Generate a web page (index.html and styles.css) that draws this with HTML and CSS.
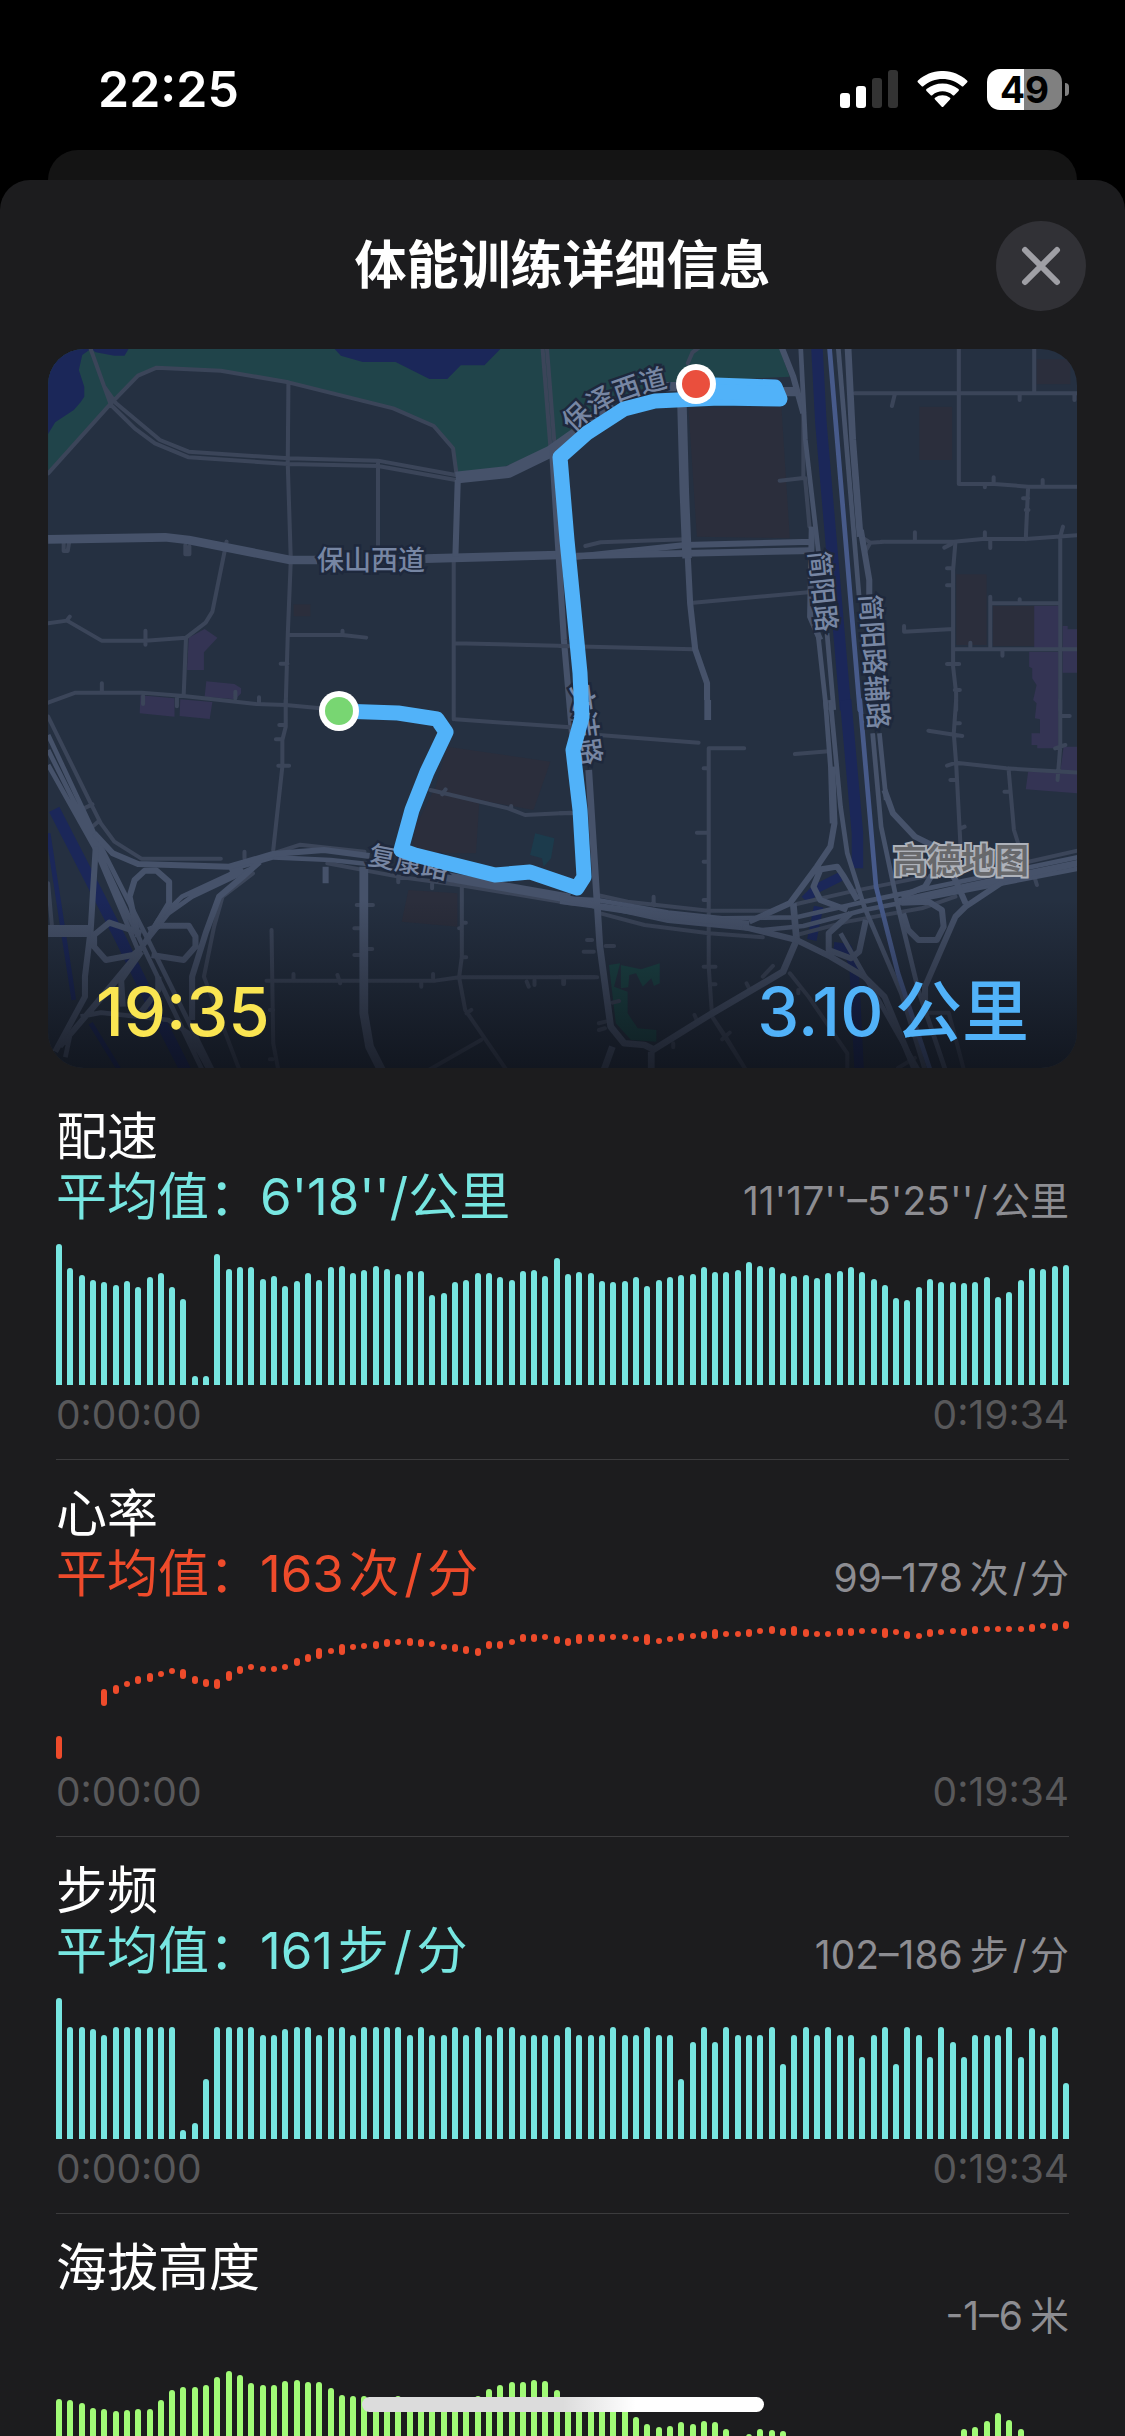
FILE: index.html
```html
<!DOCTYPE html>
<html lang="zh-CN">
<head>
    <meta charset="UTF-8">
    <meta name="viewport" content="width=device-width, initial-scale=1.0">
    <title>体能训练详细信息</title>
    <link rel="stylesheet" href="styles.css">
</head>
<body>
    <div class="status-bar">
        <span class="status-time">22:25</span>
        <div class="status-icons">
            <svg class="signal" viewBox="0 0 58 38" aria-hidden="true">
                <rect x="0" y="23" width="10" height="15" rx="3" fill="#fff"/>
                <rect x="16" y="16" width="10" height="22" rx="3" fill="#fff"/>
                <rect x="32" y="8" width="10" height="30" rx="3" fill="#333"/>
                <rect x="48" y="0" width="10" height="38" rx="3" fill="#333"/>
            </svg>
            <svg class="wifi" viewBox="0 0 51 37" aria-hidden="true">
                <path d="M1 11.500Q0 10.500 1 9.500C15-3.200 36-3.200 50 9.500Q51 10.500 50 11.500L46.500 15Q45.500 16 44.500 15C34 5.500 17 5.500 6.500 15Q5.500 16 4.500 15Z"/>
                <path d="M9.500 20Q8.500 19 9.500 18C18.500 10.500 32.500 10.500 41.500 18Q42.500 19 41.500 20L37.500 24Q36.500 25 35.500 24C30 19 21 19 15.500 24Q14.500 25 13.500 24Z"/>
                <path d="M18 28.500Q17 27.500 18 26.800C22.500 23.500 28.500 23.500 33 26.800Q34 27.500 33 28.500L26.500 35.500Q25.500 36.500 24.500 35.500Z"/>
            </svg>
            <div class="battery">
                <span class="battery-level">49</span>
            </div>
        </div>
    </div>

    <div class="back-sheet"></div>

    <main class="sheet">
        <header class="sheet-header">
            <h1>体能训练详细信息</h1>
            <button class="close-btn" type="button" aria-label="关闭">
                <svg viewBox="0 0 40 40" aria-hidden="true">
                    <path d="M4 4L36 36M36 4L4 36"/>
                </svg>
            </button>
        </header>

        <div class="map-card">
            <svg class="map" viewBox="48 349 1029 719" preserveAspectRatio="xMidYMid slice" aria-label="路线">
                <defs>
                    <linearGradient id="shade" x1="0" y1="0" x2="0" y2="1">
                        <stop offset="0" stop-color="#0a0c12" stop-opacity="0"/>
                        <stop offset="0.6" stop-color="#0a0c12" stop-opacity="0.42"/>
                        <stop offset="1" stop-color="#0a0c12" stop-opacity="0.7"/>
                    </linearGradient>
                    <path id="baoze" d="M574 434C592 410 622 397 672 386"/>
                </defs>
                <rect class="land" x="48" y="349" width="1029" height="719"/>

                <!-- north west -->
                <g transform="translate(40 340) scale(0.338 0.3333)">
                    <path class="park" d="M24 27V400L210 190 290 107 345 83 535 92 735 127 1045 205 1165 258 1222 325 1232 400 1375 380 1510 320 1690 180 1830 130 2218 110 2188 27Z"/>
                    <path class="water" d="M24 27H150L125 45 115 90 131 140V170L120 187 100 210 45 247 24 282ZM150 27L165 37 220 47H250L262 27ZM872 27L890 47 955 66H1052L1152 117H1205L1245 76H1315L1362 27Z"/>
                    <path class="mall" d="M440 893L487 867 525 893 485 937V990H435ZM492 1024L575 1032 595 1045V1060L578 1078 487 1070ZM297 1066L398 1075V1130L295 1120ZM415 1078L510 1086 502 1137 413 1128Z"/>
                    <path class="block" d="M750 793h50v36h-50z"/>
                    <path class="minor" d="M24 400L210 190 290 107 345 83 535 92 735 127 1045 205 1165 258 1222 325 1232 400M150 27L190 140 225 190 355 300 440 335 735 355 1000 362 1230 405M190 140L210 195 240 225 280 265 340 310 440 352 735 372 1000 378 1230 420M735 127L733 372 742 660 733 885 727 1095M1000 362V620M1487 27L1510 320M1500 27L1522 310M1224 655V1138M24 850L80 842 182 902H312L432 893 490 848 510 815 552 605M432 893L425 1068M24 1088L105 1058H300L425 1068 640 1092 727 1095 830 1105M733 885H895L965 893M1228 910L1560 918M312 872v42M183 1030v28M305 1068v24M405 1075v24M578 1055v20M648 1072v18M712 971h20M88 830l-9 12M895 872v12M70 605v28h12l4-25M430 615v28h12v-25"/>
                    <path class="major w26" d="M24 598L370 592 440 600 740 660H820M1140 656L1535 645"/>
                    <path class="major w36" d="M1230 413L1385 396 1510 335 1600 270 1690 190"/>
                    <path class="major w18" d="M1236 420L1229 650M1515 330L1550 900 1580 1250"/>
                </g>

                <!-- north east -->
                <g transform="translate(560 340) scale(0.338 0.3333)">
                    <path class="block" d="M380 205L655 200 680 595 405 590ZM1063 200h97v160h-97zM1410 58h100v75h-100zM1172 703h90v212h-90zM1280 797h125v122h-125z"/>
                    <path class="mall" d="M1403 797h80v130h-80zM1487 858h15v10h28v130h-43zM1388 935H1475V1225H1412V1215H1395V1180H1420V1138L1405 1135 1410 1090 1400 1080 1410 1035 1397 1015V985L1388 980Z"/>
                    <path class="canal w34" d="M760 20L772 250 845 1110"/>
                    <path class="minor" d="M872 160H1540M1180 20V432H1285L1385 440H1540M1403 20V160M990 165l-8 33M1385 440L1378 598M950 605H1165L1250 597H1378L1540 585M890 590L918 608 960 605M918 608L900 640M1480 590V1110M1170 605L1163 690V980L1172 1060V1110M1273 770V925M1273 790H1480M1163 928H1540M1018 858V875L1163 867M1283 412v18M1428 420v18M1257 437v5M1370 475h15M1378 510h8M1050 577v28M1257 577v20M1273 598v26M1137 623l20-10M1145 685h18M1145 736h18M1360 778v10M1214 908v18M1309 935v12M1145 972h36M1168 1050h15M1360 165v15M1522 165v15M1488 560l-8 30M650 422L720 414 720 200M75 618L120 607 370 598M395 788L735 757M0 918L395 928M378 70L392 37 412 22M725 414L738 560"/>
                    <path class="major w18" d="M378 650L385 790 400 928 435 1030V1080M655 20L690 110 720 220M745 560L740 830 770 900M48 650L370 615 745 605M890 570L915 720V770"/>
                    <path class="major w20" d="M48 648L370 640 745 632"/>
                    <path class="major w28" d="M361 200L368 460 376 655M280 140H345M650 155H705"/>
                    <path class="major w14" d="M712 20L726 300 765 640M762 870L788 1110M790 880L810 1110M823 20L885 770"/>
                    <path class="major w20" d="M852 20L866 300 888 590"/>
                    <path class="rail" d="M797 20L887 1110"/>
                </g>

                <!-- south west -->
                <g transform="translate(40 700) scale(0.338 0.3333)">
                    <path class="block" d="M1205 140L1510 185 1460 330 1300 300 1290 460 1100 460 1110 380 1170 260ZM1090 570L1235 580V680L1070 665Z"/>
                    <path class="pool" d="M1465 400L1522 415 1512 475 1490 500 1485 475 1450 465Z"/>
                    <path class="canal w34" d="M42 328L190 620 240 720 340 930 430 1110"/>
                    <path class="canal w14" d="M24 400L100 900M150 970L235 1110"/>
                    <path class="minor" d="M24 50L155 320 180 370 220 425 300 476H535M130 325l25-12M155 380l20-18M727 0V80L717 120V200L690 450M690 460L770 434 960 455M24 550L35 675M630 520L540 590 515 680 485 830 590 1110M685 690L690 1030 705 1110M670 842H1170L1240 832H1640M1248 560V770L1240 832 1258 930 1380 1110M1305 1020L1150 1110M850 490L1060 530 1240 555 1580 612M1155 270L1385 325 1435 345 1570 338M1228 58L1568 82M708 75h15M698 118h15M705 197h32M1160 550v15M1060 535v12M605 455v20M937 615h48M930 685h20M930 765h20M958 747h25M750 822v15M880 825l8 25M1163 822v12M1128 845v15M1248 668h12M1240 685h8M1253 772h8M1440 845l6 15M1463 840v15M1548 840v12M680 930h10M680 1078h8M1200 268l-10 15M1394 318v10M1262 940l14-10"/>
                    <path class="major w14" d="M24 105L165 410 320 720 510 1110M24 150L150 405 305 740 480 1110M24 195L165 450 290 750M560 510L690 472 860 480 970 492M620 508L450 590 380 640 310 730 230 840 60 1040M600 505L420 590 350 660 300 745 90 1000 75 1072M120 950L180 938 380 960 440 1000 500 1110"/>
                    <path class="major w18" d="M160 400L215 460 290 492 560 500 690 462 840 450 975 468M165 440L150 690 133 830V890L45 1055M290 710L265 590 280 540 310 512H345L382 545V610L310 730M300 700L205 668 160 705V740L195 780 275 765 305 740M320 690L355 677H440L460 710V740L425 780 330 765M300 755L240 840 245 920M350 830V870L300 935M650 485L600 530 530 590 490 700 450 830V960M845 500v50"/>
                    <path class="major w26" d="M958 500V940L975 1040 1010 1110"/>
                    <path class="major w36" d="M24 693H150"/>
                    <path class="major w28" d="M1200 530L1568 595"/>
                </g>

                <!-- south east -->
                <g transform="translate(560 700) scale(0.338 0.3333)">
                    <path class="mall" d="M1490 140H1530V280L1378 268 1385 215H1480Z"/>
                    <path class="grove" d="M145 795L178 790 160 860 200 875V940L230 985 285 990V1025L210 1020 165 970ZM180 795L240 808 295 790V850L278 858 270 835 245 860 225 820 205 825 202 862 180 865Z"/>
                    <path class="canal w34" d="M845 0L880 400V505"/>
                    <path class="canal w28" d="M830 530L760 565 725 600M765 620L745 720M810 740L850 745 870 800 885 1110"/>
                    <path class="minor" d="M115 105L410 128M545 145H440V800L450 950 550 1110M695 162L795 154M0 340h35M0 832H110M425 205h12M405 398h32M425 485h12M425 600h12M277 590v25M425 800h35M450 853h10M80 720h15M70 755h30M135 738h25M155 908l20-5M115 970l20-5M115 990l18-5M552 850l6 12M680 820L735 890 850 1060V1110M450 950L490 1010 550 1110M480 1018l22-20M335 1030v12M398 945l5 12M110 585L200 605 440 632H620M120 640L250 675 440 700 600 712M700 612L860 575 1080 530M700 705L850 665 1070 625 1170 590M1380 487L1540 450M1172 0L1165 100 1172 190 1185 440M1090 92L1190 108M1145 197L1172 188 1320 205 1540 218M1327 205L1343 390 1357 435M1480 0V140L1472 240M1482 48h26M1465 145l30-10M1155 240h18M1315 275h15M1185 385l12-5M1405 535l6 20M1168 70h15M12 838v14M1090 938H1150L1195 1110M600 830l30-32M705 870v10M1000 1104l50-30"/>
                    <path class="major w14" d="M800 0L830 320 850 460 900 620 1010 880 1080 1110M785 0L800 200 805 370M925 100L950 380 1000 620 1060 870 1140 1110M945 100L965 300M830 700L1060 1110M0 595L110 600 320 638 480 655 700 652 900 605 1540 470M0 605L150 625 320 662 600 690 720 678 900 630 1540 505"/>
                    <path class="major w20" d="M437 0V60M0 590L120 620 320 650 560 672M1000 605L1200 560 1540 488M85 210L118 740 150 980 190 1030 250 1035 280 1050M130 1110L155 1040M270 1110V1055M275 1050L450 940 660 815 700 720 690 610"/>
                    <path class="major w18" d="M560 665L680 610 760 500 800 440 812 370 805 200M540 680L700 720 800 770 900 830 960 890 1050 1110M960 270L985 340 1050 410 1110 440 1170 540 1200 610M760 510L820 500 840 530 880 600M770 510L750 560 770 600 850 630M860 640L795 700V750L860 775 885 755 905 660M1010 608L1090 605 1130 630 1135 680 1115 720H1060L1030 690 1015 640M1310 545L1200 620 1170 650 1080 860V910M1010 590L1080 560 1100 525"/>
                    <path class="rail" d="M887 0L935 560 1000 820 1095 1110"/>
                </g>

                <g class="road-name">
                    <text x="317" y="570">保山西道</text>
                    <text><textPath href="#baoze">保泽西道</textPath></text>
                    <text transform="translate(809 552) rotate(84)">简阳路</text>
                    <text transform="translate(860 595) rotate(86)">简阳路辅路</text>
                    <text transform="translate(571 686) rotate(82)">文洁路</text>
                    <text transform="translate(367 864) rotate(11)">复康路</text>
                </g>
                <text class="map-brand" x="893" y="873">高德地图</text>

                <rect x="48" y="900" width="1029" height="168" fill="url(#shade)"/>

                <path class="route" d="M340 711L398 713 437 719 446 732 427 772 412 810 401 850 415 855 495 875 530 872 577 888 584 877 580 810 573 750 582 717 580 673 567 540 560 457 587 433 624 409 655 401 719 398 780 399 775 387 715 385 696 384"/>
                <path class="route" d="M700 392L776 393"/>
                <circle class="pin-ring" cx="339" cy="711" r="20"/>
                <circle cx="339" cy="711" r="14" fill="#78d672"/>
                <circle class="pin-ring" cx="696" cy="384" r="20"/>
                <circle cx="696" cy="384" r="14" fill="#ea4f3d"/>
            </svg>
            <div class="map-stats">
                <span class="duration">19:35</span>
                <span class="distance">3.10&#8201;公里</span>
            </div>
        </div>

        <section class="metric pace">
            <h2>配速</h2>
            <div class="summary">
                <span class="average">平均值：6'18''/公里</span>
                <span class="range">11'17''–5'25''/&#8202;公里</span>
            </div>
            <div class="chart" id="chart-pace"></div>
            <div class="axis"><span>0:00:00</span><span>0:19:34</span></div>
        </section>

        <section class="metric heart">
            <h2>心率</h2>
            <div class="summary">
                <span class="average">平均值：163&#8202;次&#8202;/&#8202;分</span>
                <span class="range">99–178&#8201;次&#8202;/&#8202;分</span>
            </div>
            <div class="chart dots" id="chart-heart"></div>
            <div class="axis"><span>0:00:00</span><span>0:19:34</span></div>
        </section>

        <section class="metric cadence">
            <h2>步频</h2>
            <div class="summary">
                <span class="average">平均值：161&#8202;步&#8202;/&#8202;分</span>
                <span class="range">102–186&#8201;步&#8202;/&#8202;分</span>
            </div>
            <div class="chart" id="chart-cadence"></div>
            <div class="axis"><span>0:00:00</span><span>0:19:34</span></div>
        </section>

        <section class="metric elevation">
            <h2>海拔高度</h2>
            <div class="summary">
                <span class="range">-1–6&#8201;米</span>
            </div>
            <div class="chart" id="chart-elevation"></div>
        </section>
    </main>

    <div class="home-indicator"></div>

    <script src="charts.js"></script>
</body>
</html>
```
FILE: styles.css
```css
* {
    box-sizing: border-box;
}

body {
    margin: 0;
    height: 100vh;
    overflow: hidden;
    display: flex;
    flex-direction: column;
    background: #000;
    color: #fff;
    font-family: Inter, "Noto Sans CJK SC", sans-serif;
}

h1, h2 {
    margin: 0;
}

/* status bar */
.status-bar {
    flex: none;
    height: 150px;
    padding: 28px 56px 0 98px;
    display: flex;
    align-items: center;
    justify-content: space-between;
}

.status-time {
    font-size: 50px;
    font-weight: 600;
}

.status-icons {
    display: flex;
    align-items: center;
    gap: 19px;
}

.signal {
    width: 58px;
    height: 38px;
}

.wifi {
    width: 51px;
    height: 37px;
    fill: #fff;
}

.battery {
    position: relative;
    width: 75px;
    height: 41px;
    margin-right: 7px;
    border-radius: 13px;
    background: linear-gradient(to right, #fff 49%, #808080 49%);
    color: #000;
    display: flex;
    align-items: center;
    justify-content: center;
}

.battery::after {
    content: "";
    position: absolute;
    right: -7px;
    top: 14px;
    width: 4px;
    height: 13px;
    border-radius: 0 4px 4px 0;
    background: #808080;
}

.battery-level {
    font-size: 37px;
    font-weight: 700;
    line-height: 41px;
}

/* sheets */
.back-sheet {
    flex: none;
    height: 30px;
    margin: 0 48px;
    border-radius: 30px 30px 0 0;
    background: #141414;
}

.sheet {
    flex: 1;
    min-height: 0;
    overflow: hidden;
    border-radius: 30px 30px 0 0;
    background: #1c1c1e;
}

.sheet-header {
    display: grid;
    grid-template-columns: 90px 1fr 90px;
    align-items: center;
    padding: 41px 39px 38px;
}

.sheet-header h1 {
    grid-column: 2;
    text-align: center;
    font-size: 52px;
    font-weight: 600;
    line-height: 60px;
}

.close-btn {
    width: 90px;
    height: 90px;
    padding: 0;
    border: none;
    border-radius: 50%;
    background: #313136;
    display: flex;
    align-items: center;
    justify-content: center;
    cursor: pointer;
}

.close-btn svg {
    width: 40px;
    height: 40px;
    fill: none;
    stroke: #9f9fa5;
    stroke-width: 6;
    stroke-linecap: round;
}

/* map */
.map-card {
    position: relative;
    margin: 0 48px 15px;
    border-radius: 36px;
    overflow: hidden;
}

.map {
    display: block;
    width: 100%;
    height: auto;
}

.land { fill: #253041; }
.park { fill: #20444a; }
.grove { fill: #1c4648; }
.water { fill: #1b2759; }
.pool { fill: #1c3b4c; }
.mall { fill: #343454; }
.block { fill: #2b2e3c; }

.minor, .major, .canal, .rail, .route {
    fill: none;
    stroke-linecap: round;
    stroke-linejoin: round;
}

.minor {
    stroke: #3b4559;
    stroke-width: 12;
}

.major { stroke: #46526a; stroke-linecap: butt; }
.canal { stroke: #1b2759; stroke-linecap: butt; }
.rail { stroke: #475a8a; stroke-width: 14; }

.w14 { stroke-width: 14; }
.w18 { stroke-width: 18; }
.w20 { stroke-width: 20; }
.w26 { stroke-width: 26; }
.w28 { stroke-width: 28; }
.w34 { stroke-width: 34; }
.w36 { stroke-width: 36; }

.road-name {
    font-size: 27px;
    font-weight: 500;
    fill: #7786a3;
    stroke: #1e283c;
    stroke-width: 5;
    paint-order: stroke;
}

.map-brand {
    font-size: 34px;
    font-weight: 700;
    fill: #67686b;
    stroke: #aeb2ba;
    stroke-width: 4;
    paint-order: stroke;
}

.route {
    stroke: #51b2f9;
    stroke-width: 15;
}

.pin-ring {
    fill: #fff;
}

.map-stats {
    position: absolute;
    left: 48px;
    right: 48px;
    bottom: 16px;
    display: flex;
    justify-content: space-between;
    font-size: 67px;
    font-weight: 500;
    line-height: 80px;
}

.duration { color: #fae552; }
.distance { color: #51b2f9; }

/* metrics */
.metric {
    margin: 0 56px;
    padding: 24px 0;
    border-bottom: 1px solid #3b3b3d;
}

.metric h2 {
    font-size: 51px;
    font-weight: 400;
    line-height: 60px;
}

.summary {
    display: flex;
    align-items: baseline;
    justify-content: space-between;
}

.average {
    font-size: 51px;
    line-height: 60px;
    color: var(--tint);
}

.range {
    margin-left: auto;
    font-size: 39px;
    line-height: 36px;
    color: #8d8d92;
}

.pace, .cadence { --tint: #77e6e1; }
.heart { --tint: #ee4b2b; }
.elevation { --tint: #a1fb77; }

.chart {
    display: flex;
    align-items: flex-end;
    justify-content: space-between;
    height: 141px;
    margin: 17px 0 10px;
}

.elevation .chart {
    margin-top: 22px;
}

.bar {
    width: 6px;
    border-radius: 3px 3px 0 0;
    background: var(--tint);
}

.dots .bar {
    border-radius: 3px;
}

.axis {
    display: flex;
    justify-content: space-between;
    font-size: 39px;
    line-height: 40px;
    color: #58585a;
}

.home-indicator {
    position: fixed;
    left: 50%;
    bottom: 24px;
    width: 402px;
    height: 15px;
    margin-left: -201px;
    border-radius: 8px;
    background: linear-gradient(to right, #dcdcdc 50%, #fff 68%);
}
```
FILE: charts.js
```js
const pace = [
    141, 117, 110, 105, 103, 100, 104, 98, 108, 112, 98, 86, 9, 9, 131, 116, 118, 118,
    106, 109, 99, 104, 112, 105, 118, 119, 112, 115, 119, 116, 111, 114, 114, 90, 92, 103,
    105, 112, 112, 108, 105, 114, 115, 109, 127, 111, 113, 112, 104, 103, 104, 108, 99, 105,
    108, 110, 111, 118, 113, 113, 115, 123, 119, 118, 112, 109, 110, 107, 112, 114, 118, 113,
    106, 100, 87, 85, 98, 106, 103, 103, 102, 103, 108, 88, 93, 105, 117, 116, 119, 120
];

const cadence = [
    141, 112, 112, 110, 104, 112, 112, 112, 112, 112, 112, 9, 16, 60, 112, 112, 112, 112,
    104, 104, 110, 112, 112, 104, 112, 112, 104, 112, 112, 112, 112, 104, 112, 104, 104, 112,
    104, 112, 104, 112, 112, 104, 104, 104, 104, 112, 104, 104, 104, 112, 104, 104, 112, 104,
    104, 60, 97, 112, 97, 112, 104, 104, 104, 112, 75, 104, 112, 104, 112, 104, 104, 82,
    104, 112, 75, 112, 104, 82, 112, 97, 82, 104, 104, 104, 112, 82, 111, 104, 112, 56
];

const elevation = [
    98, 97, 94, 89, 88, 86, 87, 88, 88, 97, 107, 110, 110, 112, 120, 126, 122, 114,
    112, 112, 116, 117, 115, 115, 109, 102, 101, 101, 99, 99, 101, 98, 98, 98, 98, 98,
    100, 101, 108, 112, 115, 115, 117, 116, 107, 98, 98, 96, 95, 93, 90, 80, 73, 70,
    71, 75, 73, 76, 75, 68, 60, 63, 68, 67, 66, 61, 55, 54, 52, 50, 50, 50,
    50, 50, 50, 50, 52, 54, 55, 57, 68, 70, 76, 84, 77, 68, 57, 55, 52, 50
];

// [distance from the top, height], 0 height = no reading
const heart = [
    [115, 23], [0, 0], [0, 0], [0, 0], [68, 17], [64, 9], [60, 6], [55, 8], [52, 9], [50, 6],
    [47, 6], [48, 10], [55, 8], [58, 8], [58, 10], [50, 10], [45, 8], [43, 6], [45, 6], [45, 6],
    [43, 6], [37, 8], [33, 8], [27, 11], [27, 6], [23, 11], [23, 6], [22, 6], [20, 8], [18, 8],
    [18, 6], [17, 8], [18, 8], [20, 6], [23, 6], [23, 8], [25, 8], [27, 8], [20, 8], [20, 8],
    [18, 6], [13, 8], [13, 8], [13, 6], [15, 8], [17, 8], [13, 10], [13, 8], [13, 8], [13, 6],
    [13, 6], [15, 6], [13, 11], [17, 6], [15, 6], [12, 8], [12, 6], [10, 8], [8, 10], [10, 6],
    [10, 6], [8, 8], [7, 6], [5, 8], [7, 8], [5, 10], [8, 8], [10, 6], [10, 6], [7, 8],
    [7, 8], [7, 6], [7, 6], [7, 10], [8, 6], [10, 8], [12, 6], [8, 8], [8, 6], [7, 6],
    [7, 8], [5, 8], [5, 6], [5, 6], [5, 6], [5, 6], [3, 8], [2, 6], [2, 8], [0, 8]
];

const CHART_HEIGHT = 141;

function addBar(chart, height, bottom) {
    const bar = document.createElement("span");
    bar.className = "bar";
    bar.style.height = height + "px";
    if (bottom) {
        bar.style.marginBottom = bottom + "px";
    }
    chart.appendChild(bar);
}

function drawBars(id, values) {
    const chart = document.getElementById(id);
    values.forEach(value => addBar(chart, value, 0));
}

function drawDots(id, values) {
    const chart = document.getElementById(id);
    values.forEach(([top, height]) => addBar(chart, height, CHART_HEIGHT - top - height));
}

drawBars("chart-pace", pace);
drawDots("chart-heart", heart);
drawBars("chart-cadence", cadence);
drawBars("chart-elevation", elevation);
```
